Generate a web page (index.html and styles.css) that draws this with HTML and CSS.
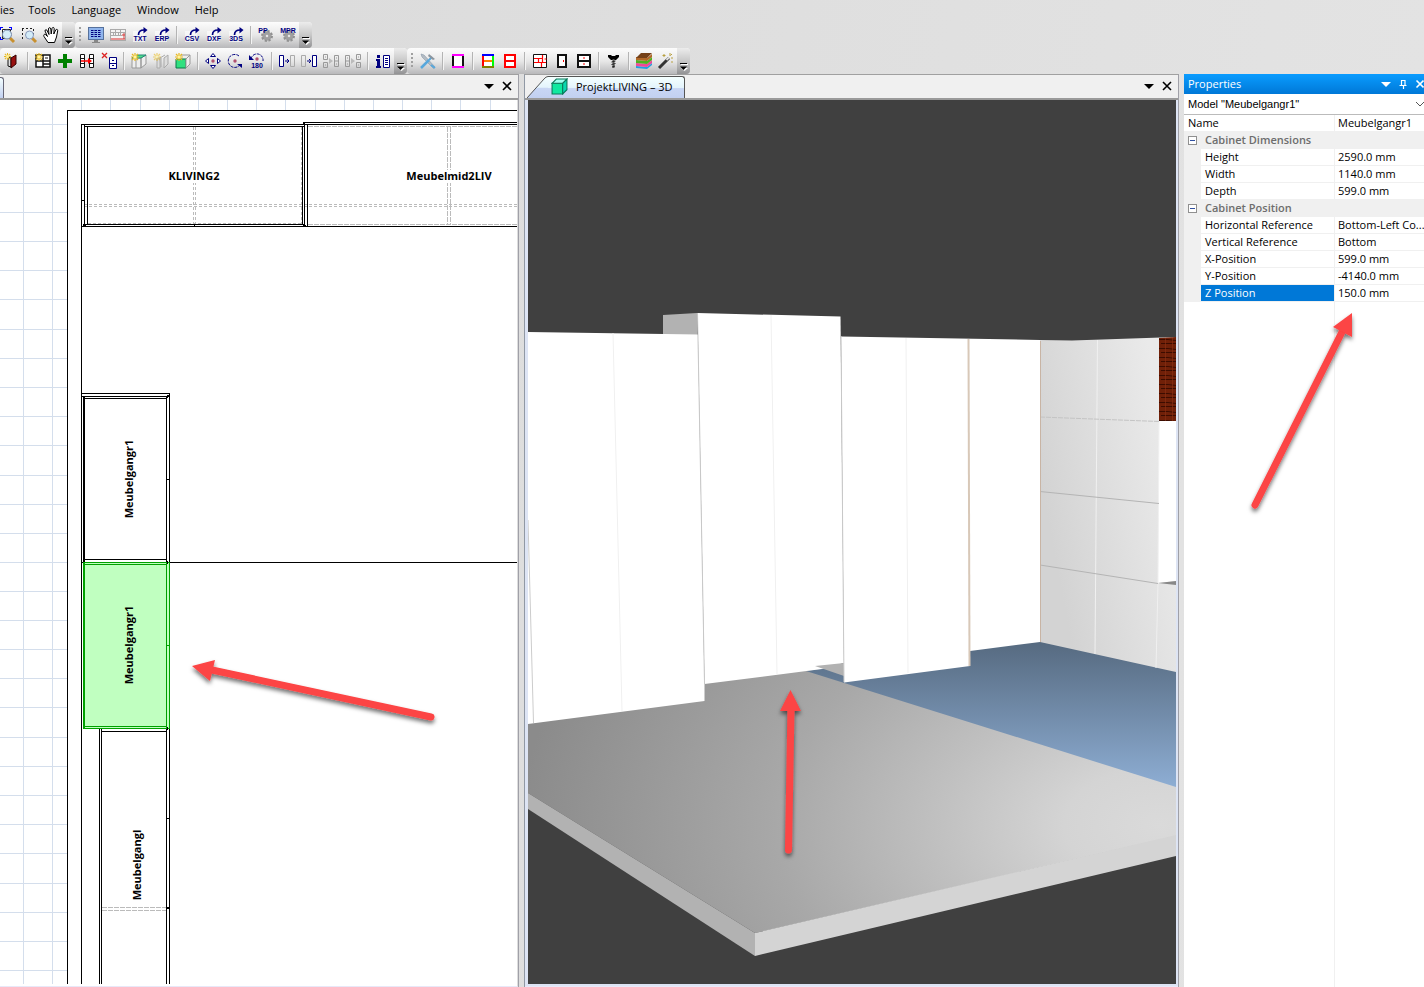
FILE: index.html
```html
<!DOCTYPE html>
<html lang="en">
<head>
<meta charset="utf-8">
<title>ProjektLIVING</title>
<link rel="stylesheet" href="styles.css">
</head>
<body>
<svg class="defs" aria-hidden="true">
  <defs>
    <symbol id="spark" viewBox="0 0 8 8"><path d="M4 0v8M0 4h8M1 1l6 6M7 1l-6 6" stroke="#e8b820" stroke-width="1.2"/><rect x="2.500" y="2.500" width="3" height="3" fill="#fff3a0"/></symbol>
    <symbol id="export" viewBox="0 0 16 16"><rect x="1" y="4" width="12" height="11" fill="#fff" opacity=".6"/><path d="M6.500 8C6.500 4.500 9 3 12 3" fill="none" stroke="#000080" stroke-width="1.700"/><path d="M11.500 0l4 3-4 3.500z" fill="#000080"/></symbol>
    <symbol id="gear" viewBox="0 0 12 12"><circle cx="6" cy="6" r="3" fill="none" stroke="#a0a0a0" stroke-width="3.500"/><circle cx="6" cy="6" r="5" fill="none" stroke="#909090" stroke-width="2" stroke-dasharray="2.200 1.700"/></symbol>
    <symbol id="more" viewBox="0 0 8 8"><path d="M0 .5h7" stroke="#000"/><path d="M1 1.500h7" stroke="#fff"/><path d="M1 5h7L4.500 8z" fill="#fff"/><path d="M0 3.500h7L3.500 7z" fill="#000"/></symbol>
    <filter id="shadow" x="-30%" y="-30%" width="160%" height="160%"><feDropShadow dx="0" dy="3" stdDeviation="2" flood-color="#000" flood-opacity=".55"/></filter>
  </defs>
</svg>

<header class="chrome">
  <nav class="menubar">
    <button class="menu menu-cut">ies</button>
    <button class="menu">Tools</button>
    <button class="menu">Language</button>
    <button class="menu">Window</button>
    <button class="menu">Help</button>
  </nav>

  <div class="toolrow">
    <div class="toolbar toolbar-cut">
      <button class="tool" aria-label="Zoom window"><svg viewBox="0 0 16 16"><path d="M1 .5h3M10 .5h3M1 12.500h3M1.500 0v3M12.500 0v3M1.500 10v3" stroke="#00f"/><path d="M3.500 2.500h8v9h-8z" fill="#fff" stroke="#222"/><path d="M11 11l4 4" stroke="#c89030" stroke-width="3"/><circle cx="8" cy="7.500" r="4.500" fill="#d4ecf8" stroke="#7788aa"/></svg></button>
      <button class="tool" aria-label="Zoom selection"><svg viewBox="0 0 16 16"><path d="M1 1.500h11M1.500 2v11M12.500 2v6" fill="none" stroke="#222" stroke-dasharray="2 2"/><path d="M11 11l4 4" stroke="#c89030" stroke-width="3"/><circle cx="8.500" cy="8" r="4" fill="#d4ecf8" stroke="#8899bb"/></svg></button>
      <button class="tool" aria-label="Pan"><svg viewBox="0 0 16 16"><path d="M5 15.500L1 9.500c-1-2 1-3 2-1.500l1.500 1.500L2 4c0-1.800 1.900-1.800 2.300 0L6 7.500 5.500 2c0-1.800 2.200-1.800 2.300 0L8.200 7 9 1.500c.5-1.700 2.300-1.200 2.200.2L10.800 7l1.900-4c.7-1.400 2.400-.6 2 .8L13.500 10l-2 5.500z" fill="#fff" stroke="#000"/></svg></button>
      <button class="more" aria-label="More view tools"><svg viewBox="0 0 8 8"><use href="#more"/></svg></button>
    </div>
    <div class="toolbar">
      <span class="grip"></span>
      <button class="tool" aria-label="Monitor"><svg viewBox="0 0 16 16"><rect x=".5" y=".5" width="15" height="12" fill="#8fb4ec" stroke="#56719c"/><path d="M3 3.500h10M3 5.500h10M3 7.500h10M3 9.500h10" stroke="#000080" stroke-dasharray="2.500 1"/><path d="M6 13h4v2h2v1H4v-1h2z" fill="#888"/></svg></button>
      <button class="tool" aria-label="Price list"><svg viewBox="0 0 16 16"><rect x=".5" y="2.500" width="15" height="11" fill="#f4f4f4" stroke="#aaa"/><path d="M1 5.500h14M1 8.500h14M5.500 3v5M10.500 3v5M3.500 6v3M8.500 6v3" stroke="#aaa"/><path d="M1 12h14M12 8h3" stroke="#e89090" stroke-width="2"/><path d="M14 6v6" stroke="#c44"/></svg></button>
      <button class="tool" aria-label="Export TXT"><svg viewBox="0 0 16 16"><use href="#export"/><text class="ico-text" x="8" y="14">TXT</text></svg></button>
      <button class="tool" aria-label="Export ERP"><svg viewBox="0 0 16 16"><use href="#export"/><text class="ico-text" x="8" y="14">ERP</text></svg></button>
      <span class="sep"></span>
      <button class="tool" aria-label="Export CSV"><svg viewBox="0 0 16 16"><use href="#export"/><text class="ico-text" x="8" y="14">CSV</text></svg></button>
      <button class="tool" aria-label="Export DXF"><svg viewBox="0 0 16 16"><use href="#export"/><text class="ico-text" x="8" y="14">DXF</text></svg></button>
      <button class="tool" aria-label="Export 3DS"><svg viewBox="0 0 16 16"><use href="#export"/><text class="ico-text" x="8" y="14">3DS</text></svg></button>
      <span class="sep"></span>
      <button class="tool" aria-label="Postprocessor"><svg viewBox="0 0 16 16"><use href="#gear" x="3" y="3" width="12" height="12"/><text class="ico-text" x="5" y="6">PP</text></svg></button>
      <button class="tool" aria-label="MPR"><svg viewBox="0 0 16 16"><use href="#gear" x="3" y="3" width="12" height="12"/><text class="ico-text" x="8" y="6">MPR</text></svg></button>
      <button class="more" aria-label="More export tools"><svg viewBox="0 0 8 8"><use href="#more"/></svg></button>
    </div>
  </div>

  <div class="toolrow">
    <div class="toolbar toolbar-second">
      <button class="tool" aria-label="New door"><svg viewBox="0 0 16 16"><path d="M3 4v9l3 1V5z" fill="#ddd" stroke="#111"/><path d="M6 5l5-3v9l-5 4z" fill="#9a1010" stroke="#300"/><use href="#spark" x="-1" y="0" width="7" height="7"/></svg></button>
      <span class="sep"></span>
      <button class="tool" aria-label="New cabinet"><svg viewBox="0 0 16 16"><path d="M1 2h14v12H1zM8 2v12M1 8h14M8 11h7" fill="#fff" stroke="#111" stroke-width="1.500"/><path d="M10 5h3" stroke="#111"/><use href="#spark" x="0" y="0" width="8" height="8"/></svg></button>
      <button class="tool" aria-label="Add"><svg viewBox="0 0 16 16"><path d="M6 1h4v5h5v4h-5v5H6v-5H1V6h5z" fill="#008000"/></svg></button>
      <button class="tool" aria-label="Join cabinets"><svg viewBox="0 0 16 16"><path d="M1.500 1.500h4v13h-4zM10.500 1.500h4v13h-4zM1.500 5.500h4M1.500 10.500h4M10.500 5.500h4M10.500 10.500h4" fill="#fff" stroke="#111"/><path d="M2 8h9" stroke="red" stroke-width="1.500"/><path d="M9 5l4 3-4 3z" fill="red"/></svg></button>
      <button class="tool" aria-label="Delete cabinet"><svg viewBox="0 0 16 16"><path d="M1 0l5 5M6 0L1 5" stroke="#d22" stroke-width="1.300"/><path d="M8.500 4.500h7v11h-7zM8.500 10.500h7M11 7.500h2M11 12.500h2" fill="#fff" stroke="#000080"/></svg></button>
      <span class="sep"></span>
      <button class="tool" aria-label="New top"><svg viewBox="0 0 16 16"><path d="M1 5h9v10H1zM10 5l5-3v9l-5 4z" fill="#eee" stroke="#999"/><path d="M1 5l5-3h9l-5 3z" fill="#4ee08c" stroke="#287"/><path d="M5 5v10" stroke="#999"/><use href="#spark" width="8" height="8"/></svg></button>
      <button class="tool" aria-label="New divider"><svg viewBox="0 0 16 16"><path d="M4 5h3v10H4zM11 5l4-3v9l-4 4zM7 5l5-3M8 5v9" fill="#ddd" stroke="#aaa"/><use href="#spark" width="8" height="8" opacity=".6"/></svg></button>
      <button class="tool" aria-label="New body"><svg viewBox="0 0 16 16"><path d="M1 6h10v9H1z" fill="#30e080" stroke="#087848"/><path d="M11 6l4-4v9l-4 4zM1 6l5-4h9" fill="#eee" stroke="#999"/><use href="#spark" width="8" height="8"/></svg></button>
      <span class="sep"></span>
      <button class="tool" aria-label="Move"><svg viewBox="0 0 16 16"><path d="M8 .5L5.500 3.500h5zM8 15.500l-2.500-3h5zM.5 8l3-2.500v5zM15.500 8l-3-2.500v5z" fill="#fff" stroke="#000080"/><circle cx="8" cy="8" r="1.700" fill="#b05070"/></svg></button>
      <button class="tool" aria-label="Rotate"><svg viewBox="0 0 16 16"><path d="M12 3A6.500 6.500 0 1 0 13.500 11" fill="none" stroke="#000080" stroke-dasharray="3 1"/><path d="M10 11h5v4z" fill="#000080"/><circle cx="8" cy="8" r="1.700" fill="#b05070"/></svg></button>
      <button class="tool" aria-label="Rotate 180"><svg viewBox="0 0 16 16"><path d="M2 6A6 6 0 0 1 14 8" fill="none" stroke="#000080" stroke-dasharray="3 1"/><path d="M0 2v5h5z" fill="#000080"/><circle cx="8" cy="6" r="1.700" fill="#b05070"/><text class="ico-text" x="8" y="15">180</text></svg></button>
      <span class="sep"></span>
      <button class="tool" aria-label="Snap right"><svg viewBox="0 0 16 16"><path d="M.5 2.500h4v11h-4z" fill="#fff" stroke="#000080"/><path d="M11.500 2.500h4v11h-4z" fill="none" stroke="#aaa"/><path d="M6 8h4M8 6l2 2-2 2" fill="none" stroke="#000080"/></svg></button>
      <button class="tool" aria-label="Snap to right"><svg viewBox="0 0 16 16"><path d="M.5 2.500h4v11h-4z" fill="none" stroke="#aaa"/><path d="M11.500 2.500h4v11h-4z" fill="#fff" stroke="#000080"/><path d="M6 8h4M8 6l2 2-2 2" fill="none" stroke="#000080"/></svg></button>
      <button class="tool" aria-label="Copy right" disabled><svg viewBox="0 0 16 16"><path d="M.5 1.500h4v5h-4zM.5 9.500h4v5h-4zM11.500 2.500h4v11h-4zM11.500 8h4M2 4h1M2 12h1M13 5h1M13 11h1" fill="none" stroke="#999"/><path d="M6 5l4 3-4 3z" fill="#bbb"/></svg></button>
      <button class="tool" aria-label="Copy left" disabled><svg viewBox="0 0 16 16"><path d="M.5 2.500h4v11h-4zM.5 8h4M11.500 1.500h4v5h-4zM11.500 9.500h4v5h-4zM2 5h1M2 11h1M13 4h1M13 12h1" fill="none" stroke="#999"/><path d="M6 5l4 3-4 3z" fill="#bbb"/></svg></button>
      <span class="sep"></span>
      <button class="tool" aria-label="Information"><svg viewBox="0 0 16 16"><path d="M2 2h3v3H2zM1 6h4v7h1v2H1v-2h1V8H1z" fill="#000080"/><path d="M8.500 2.500h6v12h-6z" fill="#fff" stroke="#000080"/><path d="M10 5.500h3M10 7.500h3M10 9.500h3M10 11.500h3" stroke="#000080"/></svg></button>
      <button class="more" aria-label="More cabinet tools"><svg viewBox="0 0 8 8"><use href="#more"/></svg></button>
    </div>
    <div class="toolbar">
      <span class="grip"></span>
      <button class="tool" aria-label="Settings"><svg viewBox="0 0 16 16"><path d="M1 1l3 1 11 12-1.500 1.500L2 4z" fill="#b4bcc4" stroke="#8899aa" stroke-width=".6"/><path d="M1 15l8-8" stroke="#58a8dc" stroke-width="2.500"/><path d="M9 7l3-3M11 12l4 3" stroke="#58a8dc" stroke-width="2"/><path d="M9 1l6 5-2 1-5-4z" fill="#8c959e"/></svg></button>
      <span class="sep"></span>
      <button class="tool" aria-label="Frame"><svg viewBox="0 0 16 16"><path d="M3 2v12M13 2v12" stroke="#111" stroke-width="2"/><path d="M2 2h12M2 14h12" stroke="#f0f" stroke-width="2"/><path d="M4 3h8v10H4z" fill="#fff"/></svg></button>
      <span class="sep"></span>
      <button class="tool" aria-label="Edge colours"><svg viewBox="0 0 16 16"><path d="M3 3h10v10H3z" fill="#fff"/><path d="M3 2v12" stroke="red" stroke-width="2"/><path d="M13 2v12" stroke="#0f0" stroke-width="2"/><path d="M2 2h12" stroke="#00f" stroke-width="2"/><path d="M4 8h8" stroke="#ff8000" stroke-width="2"/><path d="M2 14h12" stroke="#808000" stroke-width="2"/></svg></button>
      <button class="tool" aria-label="Shelves"><svg viewBox="0 0 16 16"><path d="M3 2h10v12H3zM3 8h10" fill="#fff" stroke="red" stroke-width="2"/></svg></button>
      <span class="sep"></span>
      <button class="tool" aria-label="Layout"><svg viewBox="0 0 16 16"><path d="M1.500 1.500h13v13h-13z" fill="#fff" stroke="#111"/><path d="M2 5.500h9M6.500 5v5M10.500 2v8M6 9.500h8M2 9.500h5M9.500 10v4M12.500 6h2" fill="none" stroke="red" stroke-width="1.200"/></svg></button>
      <button class="tool" aria-label="Door"><svg viewBox="0 0 16 16"><path d="M4 2h8v12H4z" fill="#fff" stroke="#111" stroke-width="2"/><path d="M9.500 7v2" stroke="red"/></svg></button>
      <button class="tool" aria-label="Drawers"><svg viewBox="0 0 16 16"><path d="M2 2h12v12H2zM2 8h12" fill="#fff" stroke="#111" stroke-width="2"/><path d="M7 5h2M7 11h2" stroke="red"/></svg></button>
      <span class="sep"></span>
      <button class="tool" aria-label="Fittings"><svg viewBox="0 0 16 16"><path d="M2 2h3l1 1h3l1-1h3v2l-3 3H5L2 4z" fill="#000"/><path d="M7.500 6v9" stroke="#555" stroke-width="2"/><path d="M5.500 9l4-1M5.500 11.500l4-1M6 14l3-1" stroke="#222"/></svg></button>
      <span class="sep"></span>
      <button class="tool" aria-label="Materials"><svg viewBox="0 0 16 16"><path d="M0 13l11 1 5-4v2l-5 4-11-1z" fill="#20a0e0"/><path d="M0 10l11 1 5-4v3l-5 4-11-1z" fill="#f04898"/><path d="M0 7l11 1 5-4v3l-5 4-11-1z" fill="#50b020"/><path d="M0 4l11 1 5-4v3l-5 4-11-1z" fill="#b06828"/><path d="M5 0h11l-5 5H0z" fill="#744018"/></svg></button>
      <button class="tool" aria-label="Magic wand"><svg viewBox="0 0 16 16"><path d="M1 15L11 5" stroke="#333" stroke-width="3"/><path d="M8.500 7L11 4.500" stroke="#ddd" stroke-width="2"/><path d="M12 0v3M15 5h-2M14 1l-1.500 1.500M6 1v3M4.500 2.500h3M14 8v2" stroke="#b8a040"/></svg></button>
      <button class="more" aria-label="More design tools"><svg viewBox="0 0 8 8"><use href="#more"/></svg></button>
    </div>
  </div>
</header>

<main class="workspace">
  <section class="pane" aria-label="Floor plan">
    <div class="tabstrip">
      <span class="tab-end"></span>
      <span class="pane-actions">
        <button class="pane-btn" aria-label="Window list"><svg viewBox="0 0 10 10"><path d="M0 3h10L5 8z"/></svg></button>
        <button class="pane-btn" aria-label="Close plan"><svg viewBox="0 0 10 10"><path d="M1 1l8 8M9 1l-8 8" stroke="#000" stroke-width="1.600"/></svg></button>
      </span>
    </div>
    <div class="plan-body">
      <svg class="canvas" viewBox="0 100 517 884" preserveAspectRatio="xMinYMin slice" role="img" aria-label="Plan drawing">
        <g class="crisp">
          <rect x="0" y="100" width="517" height="884" fill="#fff"/>
          <path class="grid-line" d="M23.500 100v884M52.500 100v884M81.500 100v10M110.500 100v10M140.500 100v10M169.500 100v10M198.500 100v10M227.500 100v10M256.500 100v10M285.500 100v10M315.500 100v10M344.500 100v10M373.500 100v10M402.500 100v10M431.500 100v10M460.500 100v10M490.500 100v10"/>
          <path class="grid-line" d="M0 124.500h67M0 153.500h67M0 183.500h67M0 212.500h67M0 241.500h67M0 270.500h67M0 299.500h67M0 329.500h67M0 358.500h67M0 387.500h67M0 416.500h67M0 445.500h67M0 475.500h67M0 504.500h67M0 533.500h67M0 562.500h67M0 591.500h67M0 620.500h67M0 649.500h67M0 678.500h67M0 707.500h67M0 737.500h67M0 766.500h67M0 795.500h67M0 824.500h67M0 853.500h67M0 883.500h67M0 912.500h67M0 941.500h67M0 970.500h67"/>
          <path class="dash" d="M193.500 127v97M195.500 127v97M301.500 127v97M84 204.500h433M84 206.500h433M88 223.500h214"/>
          <path class="dash-long" d="M447.500 127v98M450.500 127v98M308 126.500h209M308 224.500h209M102 907.500h64M102 910.500h64"/>
          <path class="ink" d="M67.500 984V110.500H517M81.500 984V124.500H304M84.500 125v100M84 126.500h220M87.500 126v99M302.500 126v99M303.500 122v3M304.500 122v103M307.500 124v102M304 122.500h213M304 124.500h213M83 224.500h221M81 226.500h436M81 200.500h3M194.500 224v2M83 225.500h3M303 225.500h3"/>
          <path class="ink" d="M81 393.500h88.500V984M81 396.500h88M84 398.500h82M83.500 396v166M84.500 396v166M166.500 396v588M84 559.500h82M81 562.500h436M167 479.500h3"/>
          <path class="ink" d="M99.500 729v255M101.500 729v255M101 731.500h65M167 818.500h3"/>
          <rect x="83" y="562" width="87" height="167" fill="#c0ffc0"/>
          <path class="picked" d="M83 562.500h86.500v166H83M84 564.500h82M84 726.500h82M83.500 562v167M84.500 562v167M166.500 562v167M167 645.500h3"/>
          <path class="ink" d="M167 395.500h2M167.500 395v3M167 561.500h1M167.500 561v3M167.500 727v3M166 908.500h4M167 907.500h2"/>
          <path d="M169 170h51v13h-51zM407 170h84v13h-84z" fill="#fff"/>
        </g>
        <text class="plan-label" x="194" y="180">KLIVING2</text>
        <text class="plan-label" x="449" y="180">Meubelmid2LIV</text>
        <text class="plan-label" transform="translate(133 479) rotate(-90)">Meubelgangr1</text>
        <text class="plan-label" transform="translate(133 645) rotate(-90)">Meubelgangr1</text>
        <text class="plan-label" transform="translate(141 865) rotate(-90)">Meubelgangl</text>
        <g class="arrow" filter="url(#shadow)"><path d="M212 670L431 717"/><path class="arrow-head" d="M192 666l23-6-5 21z"/></g>
      </svg>
    </div>
  </section>

  <section class="pane pane-3d" aria-label="3D view">
    <div class="tabstrip">
      <svg class="tab-slope" viewBox="0 0 21 22"><defs><linearGradient id="tabg" x2="0" y2="1"><stop offset="0" stop-color="#f4ffff"/><stop offset=".5" stop-color="#e4f4fc"/><stop offset=".55" stop-color="#c8d6f4"/><stop offset="1" stop-color="#c2d0f0"/></linearGradient></defs><path d="M0 22L17 3Q19 .5 21 .5V22z" fill="url(#tabg)"/><path d="M0 22L17 3Q19 .5 21 .5" fill="none" stroke="#555"/></svg>
      <button class="tab"><svg viewBox="0 0 16 16"><path d="M1 5h10v10H1z" fill="#10e8a0" stroke="#087858"/><path d="M1 5l4-4h10l-4 4z" fill="#a0fff0" stroke="#087858"/><path d="M11 5l4-4v10l-4 4z" fill="#08d8b0" stroke="#087858"/></svg>ProjektLIVING – 3D</button>
      <span class="pane-actions">
        <button class="pane-btn" aria-label="Window list"><svg viewBox="0 0 10 10"><path d="M0 3h10L5 8z"/></svg></button>
        <button class="pane-btn" aria-label="Close 3D view"><svg viewBox="0 0 10 10"><path d="M1 1l8 8M9 1l-8 8" stroke="#000" stroke-width="1.600"/></svg></button>
      </span>
    </div>
    <div class="view-body">
      <svg class="canvas" viewBox="528 100 648 884" preserveAspectRatio="xMinYMin slice" role="img" aria-label="3D scene">
        <defs>
          <radialGradient id="floor" gradientUnits="userSpaceOnUse" cx="0" cy="0" r="640" gradientTransform="translate(1160 825) scale(1 .6)"><stop offset="0" stop-color="#dadada"/><stop offset=".15" stop-color="#d4d4d4"/><stop offset=".35" stop-color="#c0c0c0"/><stop offset=".6" stop-color="#a8a8a8"/><stop offset="1" stop-color="#8b8b8b"/></radialGradient>
          <linearGradient id="blue" gradientUnits="userSpaceOnUse" x1="0" y1="642" x2="0" y2="788"><stop offset="0" stop-color="#566a80"/><stop offset="1" stop-color="#8eaed4"/></linearGradient>
          <linearGradient id="wall" gradientUnits="userSpaceOnUse" x1="1040" y1="480" x2="1170" y2="455"><stop offset="0" stop-color="#d3d3d3"/><stop offset="1" stop-color="#eaeaea"/></linearGradient>
          <pattern id="wood" patternUnits="userSpaceOnUse" width="17" height="9" x="1159" y="338"><rect width="17" height="9" fill="#702008"/><path d="M0 1.500h9l8 1M2 5.500h15" stroke="#3c0c00" fill="none"/><path d="M6.500 0v9M13.500 0v9" stroke="#8c3014" opacity=".6"/></pattern>
        </defs>
        <rect x="528" y="100" width="648" height="884" fill="#404040"/>
        <path d="M528 720L704 680 1040 642 1176 672V836L755 933 528 793z" fill="url(#floor)"/>
        <path d="M528 793L755 933V956L528 809z" fill="#b2b2b2"/>
        <path d="M755 933L1176 835V856L755 956z" fill="#d4d4d4"/>
        <path d="M806 671L970 648 1040 641 1176 671V787z" fill="url(#blue)"/>
        <path d="M1040 340L1072 340.500 1176 337V672L1040 642z" fill="url(#wall)"/>
        <path d="M1159 338L1176 337V421H1159z" fill="url(#wood)"/>
        <path d="M1159 421H1176V581L1158 583z" fill="#fff"/>
        <path d="M1158 583L1176 581V585z" fill="#888"/>
        <path d="M1097.500 340L1095 654M1158 583L1156 668M1159 421L1158 583" stroke="#f0f0f0" fill="none"/>
        <path d="M1040 417L1159 421.500" stroke="#c4c4c4" stroke-dasharray="5 1"/>
        <path d="M1040 491.500L1159 503.500M1040 565L1158 583.500" stroke="#b4b4b4"/>
        <path d="M663 315L697 313V335H663z" fill="#b2b2b2"/>
        <path d="M528 332L698 334.500 704.500 684V701L528 724z" fill="#fff"/>
        <path d="M697.500 313L840.500 316.500 844 663 822 669 704.500 684z" fill="#fff"/>
        <path d="M815 666L844 663V676z" fill="#b2b2b2"/>
        <path d="M841 336.500L1040 340V642L970 651V666L844 682.500z" fill="#fff"/>
        <path d="M697.500 313L704.500 684M841 336L844 682" stroke="#c8c8c8" fill="none"/>
        <path d="M613 333L622 711M771 315L777 674M906 338L908 673" stroke="#f0f0f0" fill="none"/>
        <path d="M528 520L533.500 723" stroke="#ccc"/>
        <path d="M968.500 339L969.500 666" stroke="#d8c8b8" stroke-width="2"/>
        <path d="M1040.500 341V642" stroke="#c8b4a4" stroke-width="1"/>
        <g class="arrow" filter="url(#shadow)"><path d="M791 708L788.500 850"/><path class="arrow-head" d="M790.500 690l10.500 21h-21z"/></g>
      </svg>
    </div>
  </section>

  <aside class="props" aria-label="Properties">
    <div class="props-head"><h2 class="props-title">Properties</h2>
      <span class="props-actions">
        <button class="head-btn" aria-label="Menu"><svg viewBox="0 0 10 10"><path d="M0 3h10L5 8z" fill="#fff"/></svg></button>
        <button class="head-btn" aria-label="Pin"><svg viewBox="0 0 10 10"><path d="M3.500 6V1.500h3.500V6M1.500 6.500h7M5.500 7v3" fill="none" stroke="#fff" stroke-width="1.200"/></svg></button>
        <button class="head-btn" aria-label="Close properties"><svg viewBox="0 0 10 10"><path d="M1.500 1.500l7 7M8.500 1.500l-7 7" stroke="#fff" stroke-width="1.600"/></svg></button>
      </span>
    </div>
    <div class="model-row">
      <select class="model" aria-label="Model"><option>Model "Meubelgangr1"</option></select>
      <svg class="chevron" viewBox="0 0 8 8"><path d="M0 2l4 4 4-4" fill="none" stroke="#555"/></svg>
    </div>
    <table class="sheet">
      <colgroup><col class="col-gutter"><col class="col-name"><col></colgroup>
      <tbody>
        <tr><th class="top" colspan="2" scope="row">Name</th><td>Meubelgangr1</td></tr>
        <tr class="group"><td class="gutter"><button class="fold" aria-label="Collapse Cabinet Dimensions"></button></td><th colspan="2" scope="rowgroup">Cabinet Dimensions</th></tr>
        <tr><td class="gutter"></td><th scope="row">Height</th><td>2590.0 mm</td></tr>
        <tr><td class="gutter"></td><th scope="row">Width</th><td>1140.0 mm</td></tr>
        <tr><td class="gutter"></td><th scope="row">Depth</th><td>599.0 mm</td></tr>
        <tr class="group"><td class="gutter"><button class="fold" aria-label="Collapse Cabinet Position"></button></td><th colspan="2" scope="rowgroup">Cabinet Position</th></tr>
        <tr><td class="gutter"></td><th scope="row">Horizontal Reference</th><td>Bottom-Left Co...</td></tr>
        <tr><td class="gutter"></td><th scope="row">Vertical Reference</th><td>Bottom</td></tr>
        <tr><td class="gutter"></td><th scope="row">X-Position</th><td>599.0 mm</td></tr>
        <tr><td class="gutter"></td><th scope="row">Y-Position</th><td>-4140.0 mm</td></tr>
        <tr class="selected"><td class="gutter"></td><th scope="row">Z Position</th><td>150.0 mm</td></tr>
      </tbody>
    </table>
    <div class="props-rest">
      <svg class="canvas" viewBox="1184 302 240 685" preserveAspectRatio="xMinYMin slice" aria-hidden="true">
        <path d="M1334.500 302v685" stroke="#f0f0f0"/>
        <g class="arrow" filter="url(#shadow)"><path d="M1343 330L1255 505"/><path class="arrow-head" d="M1352 313v24l-19-10z"/></g>
      </svg>
    </div>
  </aside>
</main>
</body>
</html>
```

FILE: styles.css
```css
* { box-sizing: border-box; }

body {
  margin: 0;
  height: 100vh;
  display: flex;
  flex-direction: column;
  overflow: hidden;
  background: linear-gradient(100deg, #dadada, #e4e4e4);
  font-family: "Open Sans", "Noto Sans", sans-serif;
  font-size: 11px;
  line-height: 16px;
  color: #000;
}

button {
  margin: 0;
  padding: 0;
  border: 0;
  background: none;
  font: inherit;
  color: inherit;
}

.defs { position: absolute; width: 0; height: 0; }

/* Menu and toolbars */
.menubar {
  display: flex;
  gap: 16px;
  height: 22px;
  padding-bottom: 2px;
  align-items: center;
}
.menu { line-height: 20px; }
.menu-cut { margin-right: -2px; }

.toolrow { display: flex; height: 26px; }
.toolbar {
  display: flex;
  align-items: center;
  background: linear-gradient(#fcfcfc, #e8e8e8 50%, #b8b8ba);
  border-radius: 4px;
}
.toolbar-cut { margin-left: -4px; }
.toolbar-second { padding-left: 2px; }
.tool {
  width: 22px;
  height: 26px;
  display: flex;
  align-items: center;
  justify-content: center;
}
.tool svg { width: 16px; height: 16px; overflow: visible; }
.ico-text {
  font: bold 7px "Liberation Sans", sans-serif;
  fill: #000080;
  text-anchor: middle;
}
.sep { width: 2px; height: 18px; margin: 0 3px; border-left: 1px solid #b4b4b4; border-right: 1px solid #f4f4f4; }
.grip {
  width: 2px;
  height: 16px;
  margin: 0 4px;
  background: repeating-linear-gradient(#a0a0a0 0 2px, transparent 2px 4px);
}
.more {
  width: 13px;
  height: 26px;
  display: flex;
  align-items: flex-end;
  justify-content: flex-end;
  padding: 0 2px 3px 0;
  border-radius: 0 4px 4px 0;
  background: linear-gradient(#ececec, #c8c8c8 50%, #929294);
}
.more svg { width: 8px; height: 8px; }

/* Workspace */
.workspace {
  flex: 1;
  min-height: 0;
  display: grid;
  grid-template-columns: 519fr 655fr 240fr;
  gap: 5px;
}
.pane {
  display: flex;
  flex-direction: column;
  min-width: 0;
  min-height: 0;
  border-top: 1px solid #a0a0a0;
  border-right: 1px solid #a0a0a8;
  background: #f0f0f0;
}
.pane-3d { border-left: 1px solid #9098a4; }
.tabstrip {
  display: flex;
  align-items: flex-end;
  height: 25px;
  flex: none;
  border-bottom: 2px solid #9a9a9a;
}
.tab-end {
  width: 4px;
  height: 21px;
  border: 1px solid #667;
  border-left: 0;
  border-bottom: 0;
  border-radius: 0 3px 0 0;
  background: linear-gradient(#f4ffff, #c2d0f0);
}
.tab-slope { width: 21px; height: 22px; margin-left: 2px; }
.tab {
  display: flex;
  align-items: center;
  gap: 8px;
  height: 22px;
  padding: 0 11px 2px 3px;
  border-top: 1px solid #555;
  border-right: 1px solid #555;
  border-radius: 0 3px 0 0;
  background: linear-gradient(#f4ffff, #e4f4fc 50%, #c8d6f4 55%, #c2d0f0);
  white-space: nowrap;
}
.tab svg { width: 17px; height: 17px; }
.pane-actions {
  display: flex;
  gap: 8px;
  margin-left: auto;
  padding: 0 6px 2px 0;
  align-self: center;
}
.pane-btn { width: 10px; height: 10px; display: flex; }
.pane-btn svg { width: 10px; height: 10px; }

.plan-body, .view-body {
  flex: 1;
  min-height: 0;
  display: flex;
  border-bottom: 1px solid #e8e8f8;
}
.plan-body {
  background: #fff;
  border-right: 1px solid #ddd;
  padding-bottom: 2px;
}
.view-body { padding: 0 2px 2px 3px; background: #dde4f4; }
.canvas { display: block; width: 100%; height: 100%; min-height: 0; }
.crisp { shape-rendering: crispEdges; fill: none; }
.grid-line { stroke: #d4deec; }
.ink { stroke: #000; }
.picked { stroke: #00a000; }
.dash { stroke: #bbb; stroke-dasharray: 3 2; }
.dash-long { stroke: #bbb; stroke-dasharray: 5 1; }
.plan-label { font-weight: bold; font-size: 11px; text-anchor: middle; }
.arrow { fill: none; stroke: #fc4444; stroke-width: 7; stroke-linecap: round; }
.arrow-head { fill: #fc4444; stroke: none; }

/* Properties */
.props {
  display: flex;
  flex-direction: column;
  min-width: 0;
  min-height: 0;
  background: #fff;
}
.props-head {
  display: flex;
  align-items: center;
  justify-content: space-between;
  height: 20px;
  flex: none;
  padding-left: 4px;
  background: linear-gradient(#0a9cff, #0078d7);
  color: #fff;
}
.props-title { margin: 0; font-size: 11px; font-weight: 400; }
.props-actions { display: flex; gap: 7px; margin-right: -1px; }
.head-btn { width: 10px; height: 10px; display: flex; }
.head-btn svg { width: 10px; height: 10px; }
.model-row {
  display: flex;
  align-items: center;
  height: 21px;
  flex: none;
  border-bottom: 1px solid #bbb;
}
.model {
  flex: 1;
  min-width: 0;
  height: 20px;
  padding: 0 4px;
  border: 0;
  appearance: none;
  background: #fff;
  font: 11px "Liberation Sans", sans-serif;
  color: #000;
}
.chevron { width: 8px; height: 8px; flex: none; }
.sheet {
  width: 100%;
  flex: none;
  border-collapse: separate;
  border-spacing: 0;
  table-layout: fixed;
}
.col-gutter { width: 17px; }
.col-name { width: 133px; }
.sheet th, .sheet td {
  height: 17px;
  padding: 0 0 0 4px;
  line-height: 16px;
  text-align: left;
  font-weight: 400;
  white-space: nowrap;
  overflow: hidden;
  border-bottom: 1px solid #f0f0f0;
}
.sheet td { padding-left: 3px; border-left: 1px solid #f0f0f0; }
.sheet .gutter { padding: 0; border-left: 0; background: #f0f0f0; }
.sheet .group th { font-weight: 600; color: #6d6d6d; background: #f0f0f0; }
.sheet .selected th { background: #0078d7; color: #fff; }
.fold {
  display: block;
  width: 9px;
  height: 9px;
  margin-left: 4px;
  border: 1px solid #909090;
  background: linear-gradient(#3050a0, #3050a0) center / 5px 1px no-repeat #fff;
}
.props-rest { flex: 1; min-height: 0; display: flex; }
```
